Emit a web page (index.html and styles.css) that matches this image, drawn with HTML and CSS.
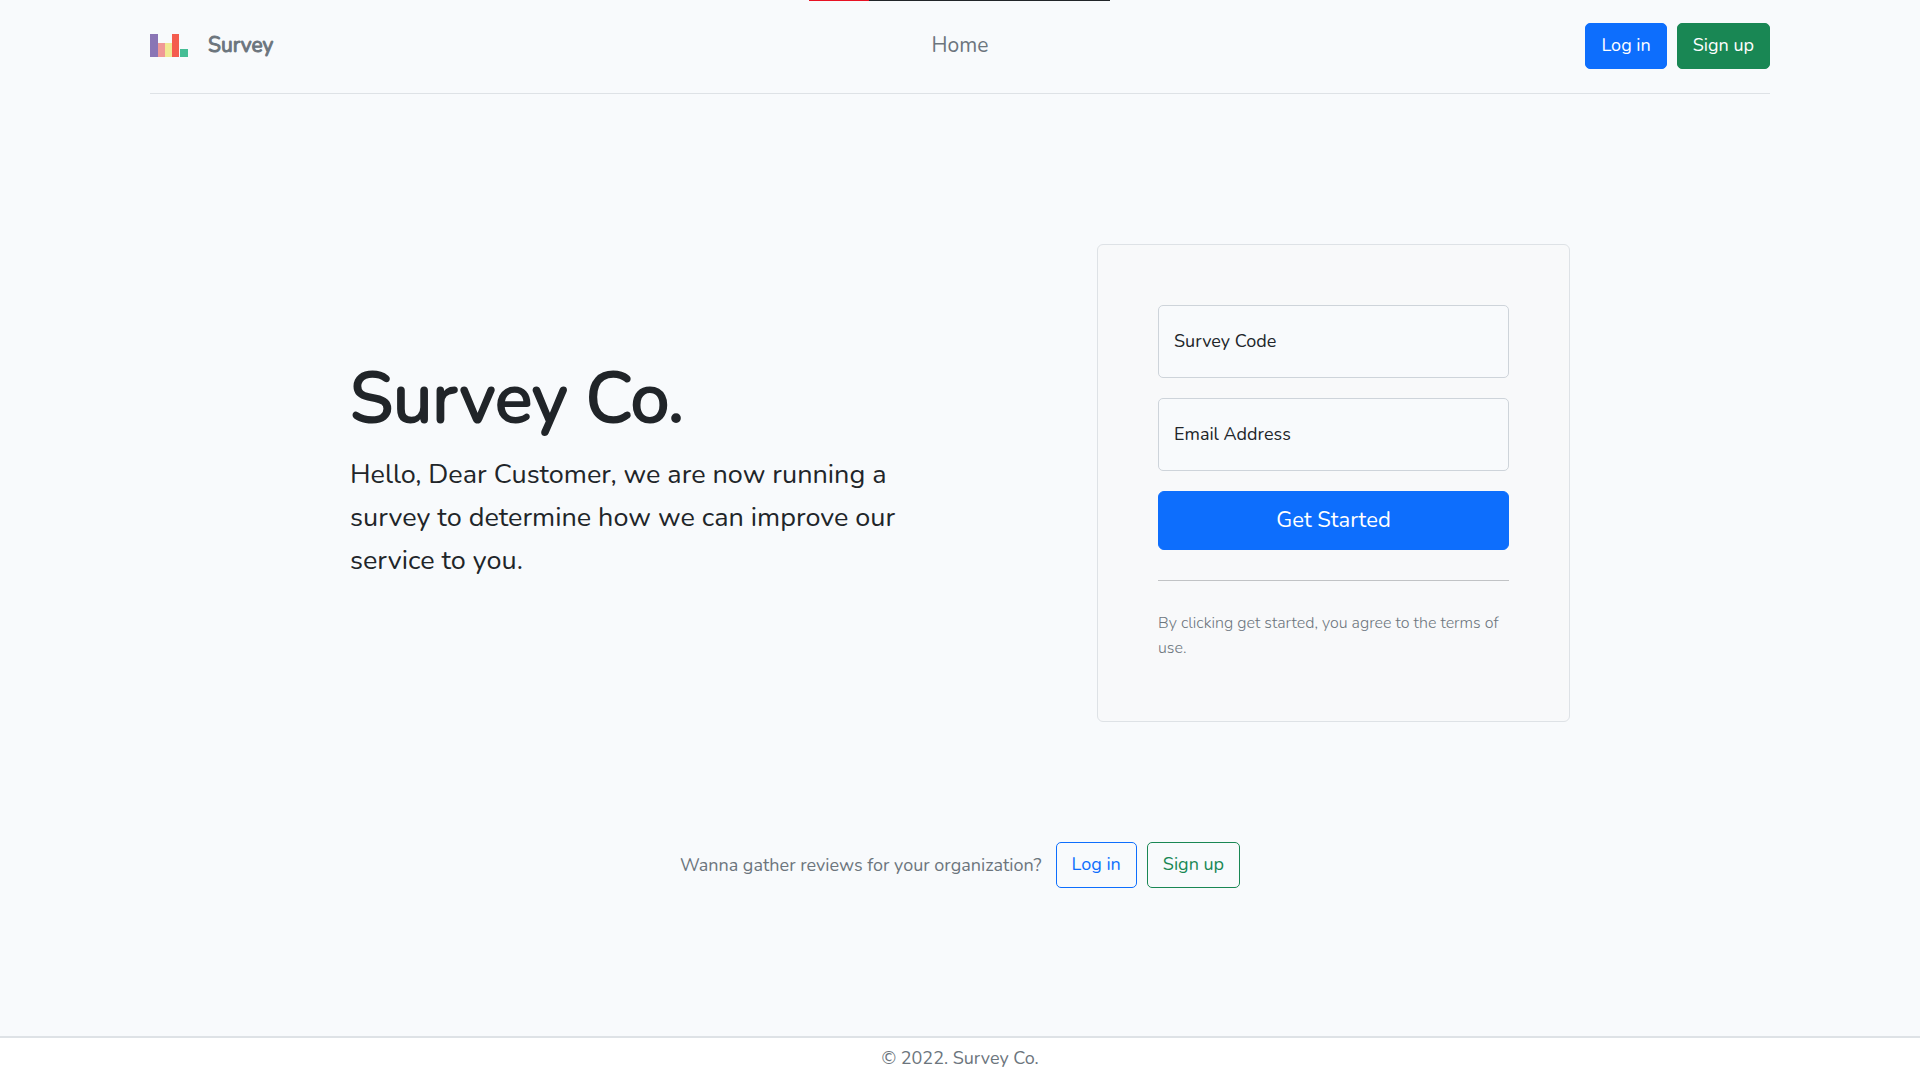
FILE: index.html
```
<!DOCTYPE html>
<html lang="en">
<head>
  <meta charset="utf-8">
  <meta name="viewport" content="width=device-width, initial-scale=1">
  <title>Survey Co.</title>
  <link rel="stylesheet" href="styles.css">
</head>
<body>
  <div class="progress"><div class="progress-value"></div></div>

  <header class="header">
    <a class="brand" href="#">
      <svg class="brand-logo" viewBox="0 0 38 23" aria-hidden="true">
        <rect x="7" y="9" width="8" height="14" fill="#f09896"/>
        <rect x="15" y="9" width="7" height="14" fill="#f1e994"/>
        <rect x="0" y="0" width="8" height="23" fill="#8a75b5"/>
        <rect x="22" y="0" width="7" height="23" fill="#f45c4e"/>
        <rect x="30" y="15" width="8" height="8" fill="#45bd95"/>
      </svg>
      <span class="brand-name">Survey</span>
    </a>
    <nav class="nav"><a class="nav-link" href="#">Home</a></nav>
    <div class="actions">
      <button class="btn btn-primary" type="button">Log in</button>
      <button class="btn btn-success" type="button">Sign up</button>
    </div>
  </header>

  <main class="main">
    <section class="hero">
      <div class="intro">
        <h1 class="title">Survey Co.</h1>
        <p class="lead">Hello, Dear Customer, we are now running a survey to determine how we can improve our service to you.</p>
      </div>
      <form class="card">
        <div class="field">
          <input class="input" type="text" id="code" placeholder=" ">
          <label class="label" for="code">Survey Code</label>
        </div>
        <div class="field">
          <input class="input" type="email" id="email" placeholder=" ">
          <label class="label" for="email">Email Address</label>
        </div>
        <button class="btn btn-primary btn-large" type="submit">Get Started</button>
        <hr class="divider">
        <p class="terms">By clicking get started, you agree to the terms of use.</p>
      </form>
    </section>

    <section class="invite">
      <p class="invite-text">Wanna gather reviews for your organization?</p>
      <div class="actions">
        <button class="btn btn-outline-primary" type="button">Log in</button>
        <button class="btn btn-outline-success" type="button">Sign up</button>
      </div>
    </section>
  </main>

  <footer class="footer">© 2022. Survey Co.</footer>
</body>
</html>
```
FILE: styles.css
```
*,
*::before,
*::after {
  box-sizing: border-box;
}

body {
  display: flex;
  flex-direction: column;
  min-height: 100vh;
  margin: 0;
  background: #f8fafc;
  color: #212529;
  font-family: Nunito, Lato, "Open Sans", sans-serif;
  font-size: 18px;
  line-height: 28px;
}

h1,
p {
  margin: 0;
}

a {
  color: #6c757d;
  text-decoration: none;
}

/* Thin bar over the top edge of the window */
.progress {
  position: absolute;
  top: 0;
  left: 50%;
  width: 301px;
  height: 1px;
  margin-left: -151px;
  background: #212529;
}

.progress-value {
  width: 20%;
  height: 100%;
  background: #e81123;
}

/* Header */
.header {
  display: grid;
  grid-template-columns: 1fr auto 1fr;
  align-items: center;
  width: calc(100% - 40px);
  max-width: 1620px;
  margin: 0 auto;
  padding: 23px 0 24px;
  border-bottom: 1px solid #dee2e6;
}

.brand,
.nav {
  padding-bottom: 2px;
}

.brand {
  display: flex;
  align-items: center;
  gap: 20px;
}

.brand-logo {
  width: 38px;
  height: 23px;
}

.brand-name {
  font-size: 21px;
  -webkit-text-stroke: 1px currentColor;
}

.nav-link {
  font-size: 21px;
}

.actions {
  display: flex;
  gap: 10px;
}

.header .actions {
  justify-content: flex-end;
}

/* Buttons */
.btn {
  padding: 7px 15px 9px;
  border: 1px solid transparent;
  border-radius: 5px;
  background: transparent;
  font: inherit;
  cursor: pointer;
}

.btn-primary {
  border-color: #0d6efd;
  background: #0d6efd;
  color: #fff;
}

.btn-success {
  border-color: #198754;
  background: #198754;
  color: #fff;
}

.btn-outline-primary {
  border-color: #0d6efd;
  color: #0d6efd;
}

.btn-outline-success {
  border-color: #198754;
  color: #198754;
}

.btn-large {
  width: 100%;
  padding: 12px 20px;
  border-radius: 6px;
  font-size: 22px;
  line-height: 33px;
}

/* Hero */
.main {
  flex: 1;
  padding: 150px 20px 140px;
}

.hero {
  display: flex;
  flex-wrap: wrap;
  align-items: center;
  justify-content: space-between;
  gap: 40px;
  max-width: 1220px;
  margin: 0 auto;
}

.intro {
  flex: 1;
  max-width: 580px;
}

.title {
  margin-bottom: 18px;
  font-size: 70px;
  font-weight: 400;
  line-height: 72px;
  -webkit-text-stroke: 2px currentColor;
}

.lead {
  margin-bottom: 22px;
  font-size: 27px;
  line-height: 43px;
}

.card {
  width: 473px;
  padding: 60px;
  border: 1px solid #dee2e6;
  border-radius: 6px;
  background: #f8f9fa;
}

.field {
  position: relative;
  margin-bottom: 20px;
}

.input {
  display: block;
  width: 100%;
  height: 73px;
  padding: 30px 16px 10px;
  border: 1px solid #ced4da;
  border-radius: 5px;
  background: #f8fafc;
  color: inherit;
  font: inherit;
}

.label {
  position: absolute;
  top: 0;
  left: 0;
  padding: 22px 16px;
  pointer-events: none;
}

.input:focus + .label,
.input:not(:placeholder-shown) + .label {
  padding: 4px 16px;
  font-size: 16px;
}

.divider {
  margin: 30px 0;
  border: 0;
  border-top: 1px solid #c1c3c5;
}

.terms {
  color: #6c757d;
  font-size: 16px;
  font-weight: 300;
  line-height: 25px;
}

/* Invitation */
.invite {
  display: flex;
  flex-wrap: wrap;
  align-items: center;
  justify-content: center;
  gap: 14px;
  margin-top: 120px;
}

.invite-text {
  color: #6c757d;
}

/* Footer */
.footer {
  padding: 6px 20px 8px;
  border-top: 2px solid #dee2e6;
  background: #fff;
  color: #6c757d;
  text-align: center;
}
```
